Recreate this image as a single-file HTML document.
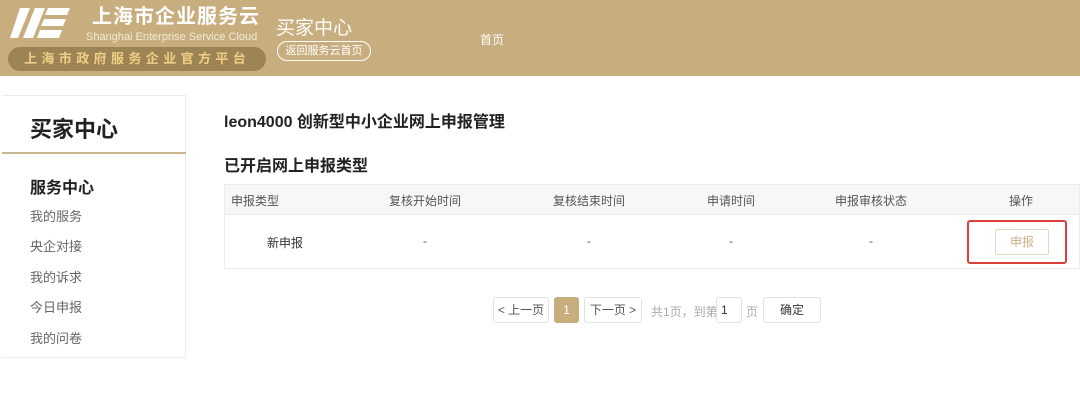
<!DOCTYPE html>
<html><head><meta charset="utf-8"><style>
*{margin:0;padding:0;box-sizing:border-box}
body{width:1080px;height:400px;background:#fff;font-family:"Liberation Sans","Noto Sans CJK SC",sans-serif;position:relative;overflow:hidden;color:#333}
.abs{position:absolute}
.hdr{left:0;top:0;width:1080px;height:76px;background:#c8ae7e}
.side{left:2px;top:95px;width:184px;height:263px;border:1px solid #ececec;border-left:none;background:#fff}
.side .t{position:absolute;left:28px;top:16px;font-size:22px;font-weight:bold;color:#222}
.side .ln{position:absolute;left:0;top:56px;width:184px;height:2px;background:#c9b78f}
.mi{position:absolute;left:28px;font-size:13px;color:#666}
.tb{left:224px;top:184px;width:856px;height:85px;border:1px solid #ececec}
.hrow{position:absolute;left:0;top:0;width:100%;height:30px;background:#f7f7f7;border-bottom:1px solid #ececec}
.c{position:absolute;font-size:12px;color:#555;text-align:center}
.pg{position:absolute;top:297px;height:26px;border:1px solid #e2e2e2;border-radius:3px;font-size:12px;color:#555;line-height:24px;text-align:center;background:#fff}
</style></head><body>
<div class="abs hdr">
  <svg class="abs" style="left:10px;top:8px" width="60" height="32" viewBox="0 0 60 32">
    <polygon points="10,0 20,0 8,30 0,30" fill="#fff"/>
    <polygon points="25,0 35,0 23,30 13,30" fill="#fff"/>
    <polygon points="38,0 60,0 57,7 35,7" fill="#fff"/>
    <polygon points="34,11 56,11 53,18 31,18" fill="#fff"/>
    <polygon points="30,22 52,22 49,30 27,30" fill="#fff"/>
  </svg>
  <div class="abs" style="left:92px;top:4px;font-size:20px;line-height:26px;font-weight:bold;color:#fff;letter-spacing:1px">上海市企业服务云</div>
  <div class="abs" style="left:86px;top:31px;font-size:11px;line-height:13px;color:#f3ead8">Shanghai Enterprise Service Cloud</div>
  <div class="abs" style="left:8px;top:47px;width:258px;height:24px;border-radius:12px;background:#9c8455"></div>
  <div class="abs" style="left:24px;top:51px;font-size:13px;line-height:16px;font-weight:bold;color:#f0cf85;letter-spacing:4.4px">上海市政府服务企业官方平台</div>
  <div class="abs" style="left:276px;top:13px;font-size:19px;color:#fff">买家中心</div>
  <div class="abs" style="left:277px;top:41px;width:94px;height:20px;border:1px solid #fff;border-radius:10px;font-size:11px;color:#fff;text-align:center;line-height:18px">返回服务云首页</div>
  <div class="abs" style="left:480px;top:31px;font-size:12px;color:#fff">首页</div>
</div>
<div class="abs side">
  <div class="t">买家中心</div>
  <div class="ln"></div>
  <div class="mi" style="top:78px;font-size:16px;font-weight:bold;color:#222">服务中心</div>
  <div class="mi" style="top:110px">我的服务</div>
  <div class="mi" style="top:140px">央企对接</div>
  <div class="mi" style="top:171px">我的诉求</div>
  <div class="mi" style="top:201px">今日申报</div>
  <div class="mi" style="top:232px">我的问卷</div>
</div>
<div class="abs" style="left:224px;top:108px;font-size:16px;font-weight:bold;color:#222">leon4000 创新型中小企业网上申报管理</div>
<div class="abs" style="left:224px;top:152px;font-size:16px;font-weight:bold;color:#222">已开启网上申报类型</div>
<div class="abs tb">
  <div class="hrow"></div>
  <div class="c" style="left:6px;top:7px">申报类型</div>
  <div class="c" style="left:140px;width:120px;top:7px">复核开始时间</div>
  <div class="c" style="left:304px;width:120px;top:7px">复核结束时间</div>
  <div class="c" style="left:446px;width:120px;top:7px">申请时间</div>
  <div class="c" style="left:586px;width:120px;top:7px">申报审核状态</div>
  <div class="c" style="left:736px;width:120px;top:7px">操作</div>
  <div class="c" style="left:40px;width:40px;top:49px;color:#333">新申报</div>
  <div class="c" style="left:140px;width:120px;top:49px">-</div>
  <div class="c" style="left:304px;width:120px;top:49px">-</div>
  <div class="c" style="left:446px;width:120px;top:49px">-</div>
  <div class="c" style="left:586px;width:120px;top:49px">-</div>
  <div class="abs" style="left:742px;top:35px;width:100px;height:44px;border:2px solid #d9413a;border-radius:3px"></div>
  <div class="abs" style="left:770px;top:44px;width:54px;height:26px;border:1px solid #e3d7bd;border-radius:2px;font-size:12px;color:#c9b287;text-align:center;line-height:24px">申报</div>
</div>
<div class="pg" style="left:493px;width:56px">&lt; 上一页</div>
<div class="pg" style="left:554px;width:25px;background:#c8ae7e;border-color:#c8ae7e;color:#fff">1</div>
<div class="pg" style="left:584px;width:58px">下一页 &gt;</div>
<div class="abs" style="left:651px;top:303px;font-size:12px;color:#aaa">共1页，到第</div>
<div class="pg" style="left:716px;width:26px;text-align:left;padding-left:4px;color:#333">1</div>
<div class="abs" style="left:746px;top:303px;font-size:12px;color:#aaa">页</div>
<div class="pg" style="left:763px;width:58px;color:#333">确定</div>
</body></html>
